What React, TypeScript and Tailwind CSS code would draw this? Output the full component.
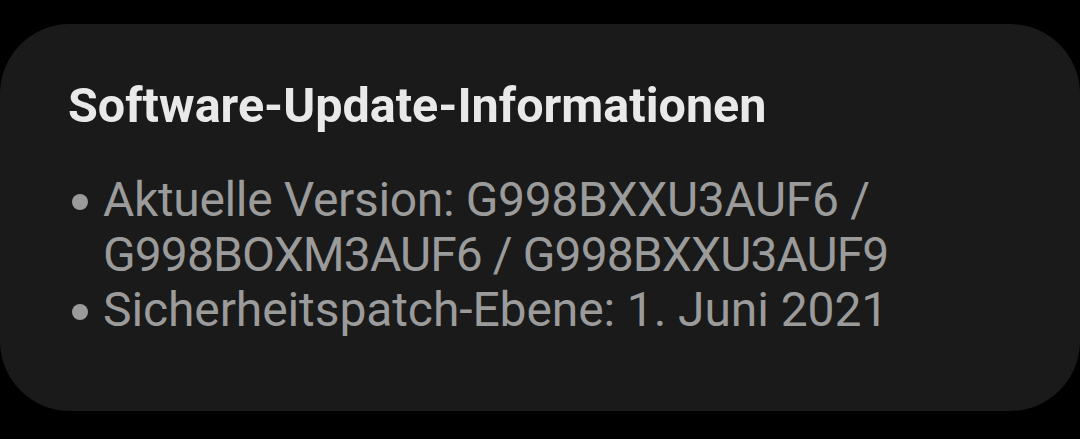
export default function App() {
  const bullets = [
    [
      { text: 'Aktuelle Version: G998BXXU3AUF6 /', cls: 'tracking-[-0.35px]' },
      { text: 'G998BOXM3AUF6 / G998BXXU3AUF9', cls: 'tracking-[-0.9px]' },
    ],
    [{ text: 'Sicherheitspatch-Ebene: 1. Juni 2021', cls: 'tracking-[-0.1px]' }],
  ];

  return (
    <main className="w-[1080px] h-[439px] bg-black pt-[24px] font-['Roboto',sans-serif]">
      <div className="h-[387px] rounded-[70px] bg-[#1a1a1a] pl-[68px] pt-[57px]">
        <h1 className="text-[48.5px] leading-[50px] font-bold text-[#e9e9e9] whitespace-nowrap">
          Software-Update-Informationen
        </h1>
        <ul className="mt-[41px]">
          {bullets.map((lines) => (
            <li key={lines[0].text} className="flex items-start">
              <span className="mt-[22px] ml-[4px] mr-[15px] h-[16px] w-[16px] shrink-0 rounded-full bg-[#9b9b9b]" />
              <div className="text-[48px] leading-[55px] text-[#9b9b9b] whitespace-nowrap">
                {lines.map((l) => (
                  <div key={l.text} className={l.cls}>
                    {l.text}
                  </div>
                ))}
              </div>
            </li>
          ))}
        </ul>
      </div>
    </main>
  );
}
